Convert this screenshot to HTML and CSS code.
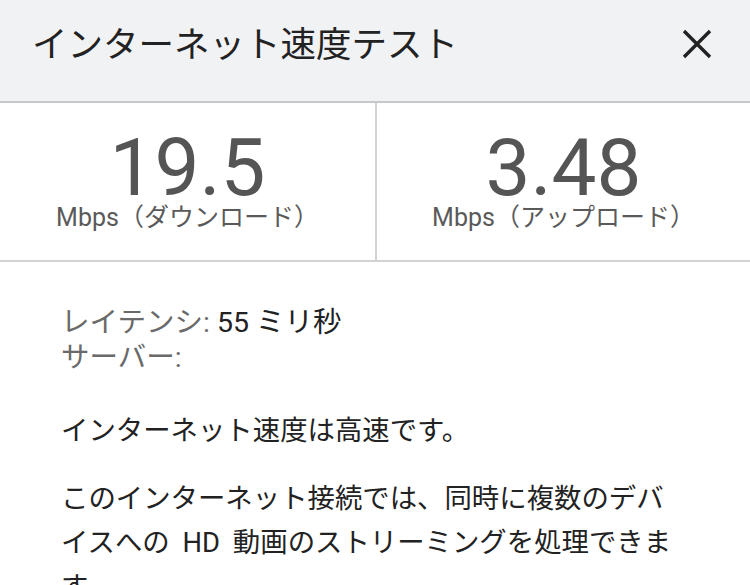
FILE: index.html
```html
<!DOCTYPE html>
<html lang="ja">
<head>
<meta charset="utf-8">
<link rel="stylesheet" href="styles.css">
</head>
<body>
<div class="page">
  <header class="header">
    <h1 class="title">インターネット速度テスト</h1>
    <button class="close" aria-label="閉じる">
      <svg width="30" height="30" viewBox="0 0 30 30"><path d="M2 2 L28 28 M28 2 L2 28" stroke="#222" stroke-width="3.4" stroke-linecap="butt" fill="none"/></svg>
    </button>
  </header>
  <section class="stats">
    <div class="stat">
      <div class="num">19.5</div>
      <div class="unit">Mbps（ダウンロード）</div>
    </div>
    <div class="stat">
      <div class="num">3.48</div>
      <div class="unit">Mbps（アップロード）</div>
    </div>
  </section>
  <section class="body">
    <div class="meta">
      <div><span class="label">レイテンシ:</span> <span class="val">55 ミリ秒</span></div>
      <div><span class="label">サーバー:</span></div>
    </div>
    <p class="msg">インターネット速度は高速です。</p>
    <p class="desc">このインターネット接続では、同時に複数のデバイスへの HD 動画のストリーミングを処理できます。</p>
  </section>
</div>
</body>
</html>
```
FILE: styles.css
```css
* { box-sizing: border-box; }
html, body { margin: 0; padding: 0; background: #fff; }
body {
  font-family: Roboto, "Noto Sans CJK JP", sans-serif;
  color: #222;
  width: 750px;
  height: 585px;
  overflow: hidden;
}
.header {
  height: 103px;
  background: #f1f2f4;
  border-bottom: 2px solid #c6c7c9;
  display: flex;
  align-items: flex-start;
  justify-content: space-between;
  padding: 22px 38px 0 32px;
}
.title {
  margin: 0;
  font-size: 35.5px;
  font-weight: 400;
  line-height: 46px;
  color: #222;
}
.close {
  border: 0;
  background: none;
  padding: 0;
  margin-top: 7px;
  width: 30px;
  height: 30px;
}
.close svg { display: block; }
.stats {
  display: grid;
  grid-template-columns: 1fr 1fr;
  height: 159px;
  border-bottom: 2px solid #d3d3d3;
}
.stat {
  display: flex;
  flex-direction: column;
  align-items: center;
  padding-top: 28px;
  color: #555;
}
.stat + .stat { border-left: 2px solid #d3d3d3; }
.num {
  font-size: 80px;
  line-height: 74px;
  color: #555;
}
.unit {
  font-size: 25px;
  line-height: 26px;
  color: #5a5a5a;
}
.body {
  padding: 43px 70px 0 61px;
  font-size: 27.4px;
}
.meta {
  line-height: 35px;
  font-size: 28.5px;
}
.label { color: #6a6a6a; }
.val { color: #222; }
.msg {
  margin: 36px 0 0;
  line-height: 40px;
  text-spacing-trim: space-all;
}
.desc {
  margin: 26px 0 0;
  line-height: 44px;
  word-spacing: 6px;
  text-spacing-trim: space-all;
}
```
